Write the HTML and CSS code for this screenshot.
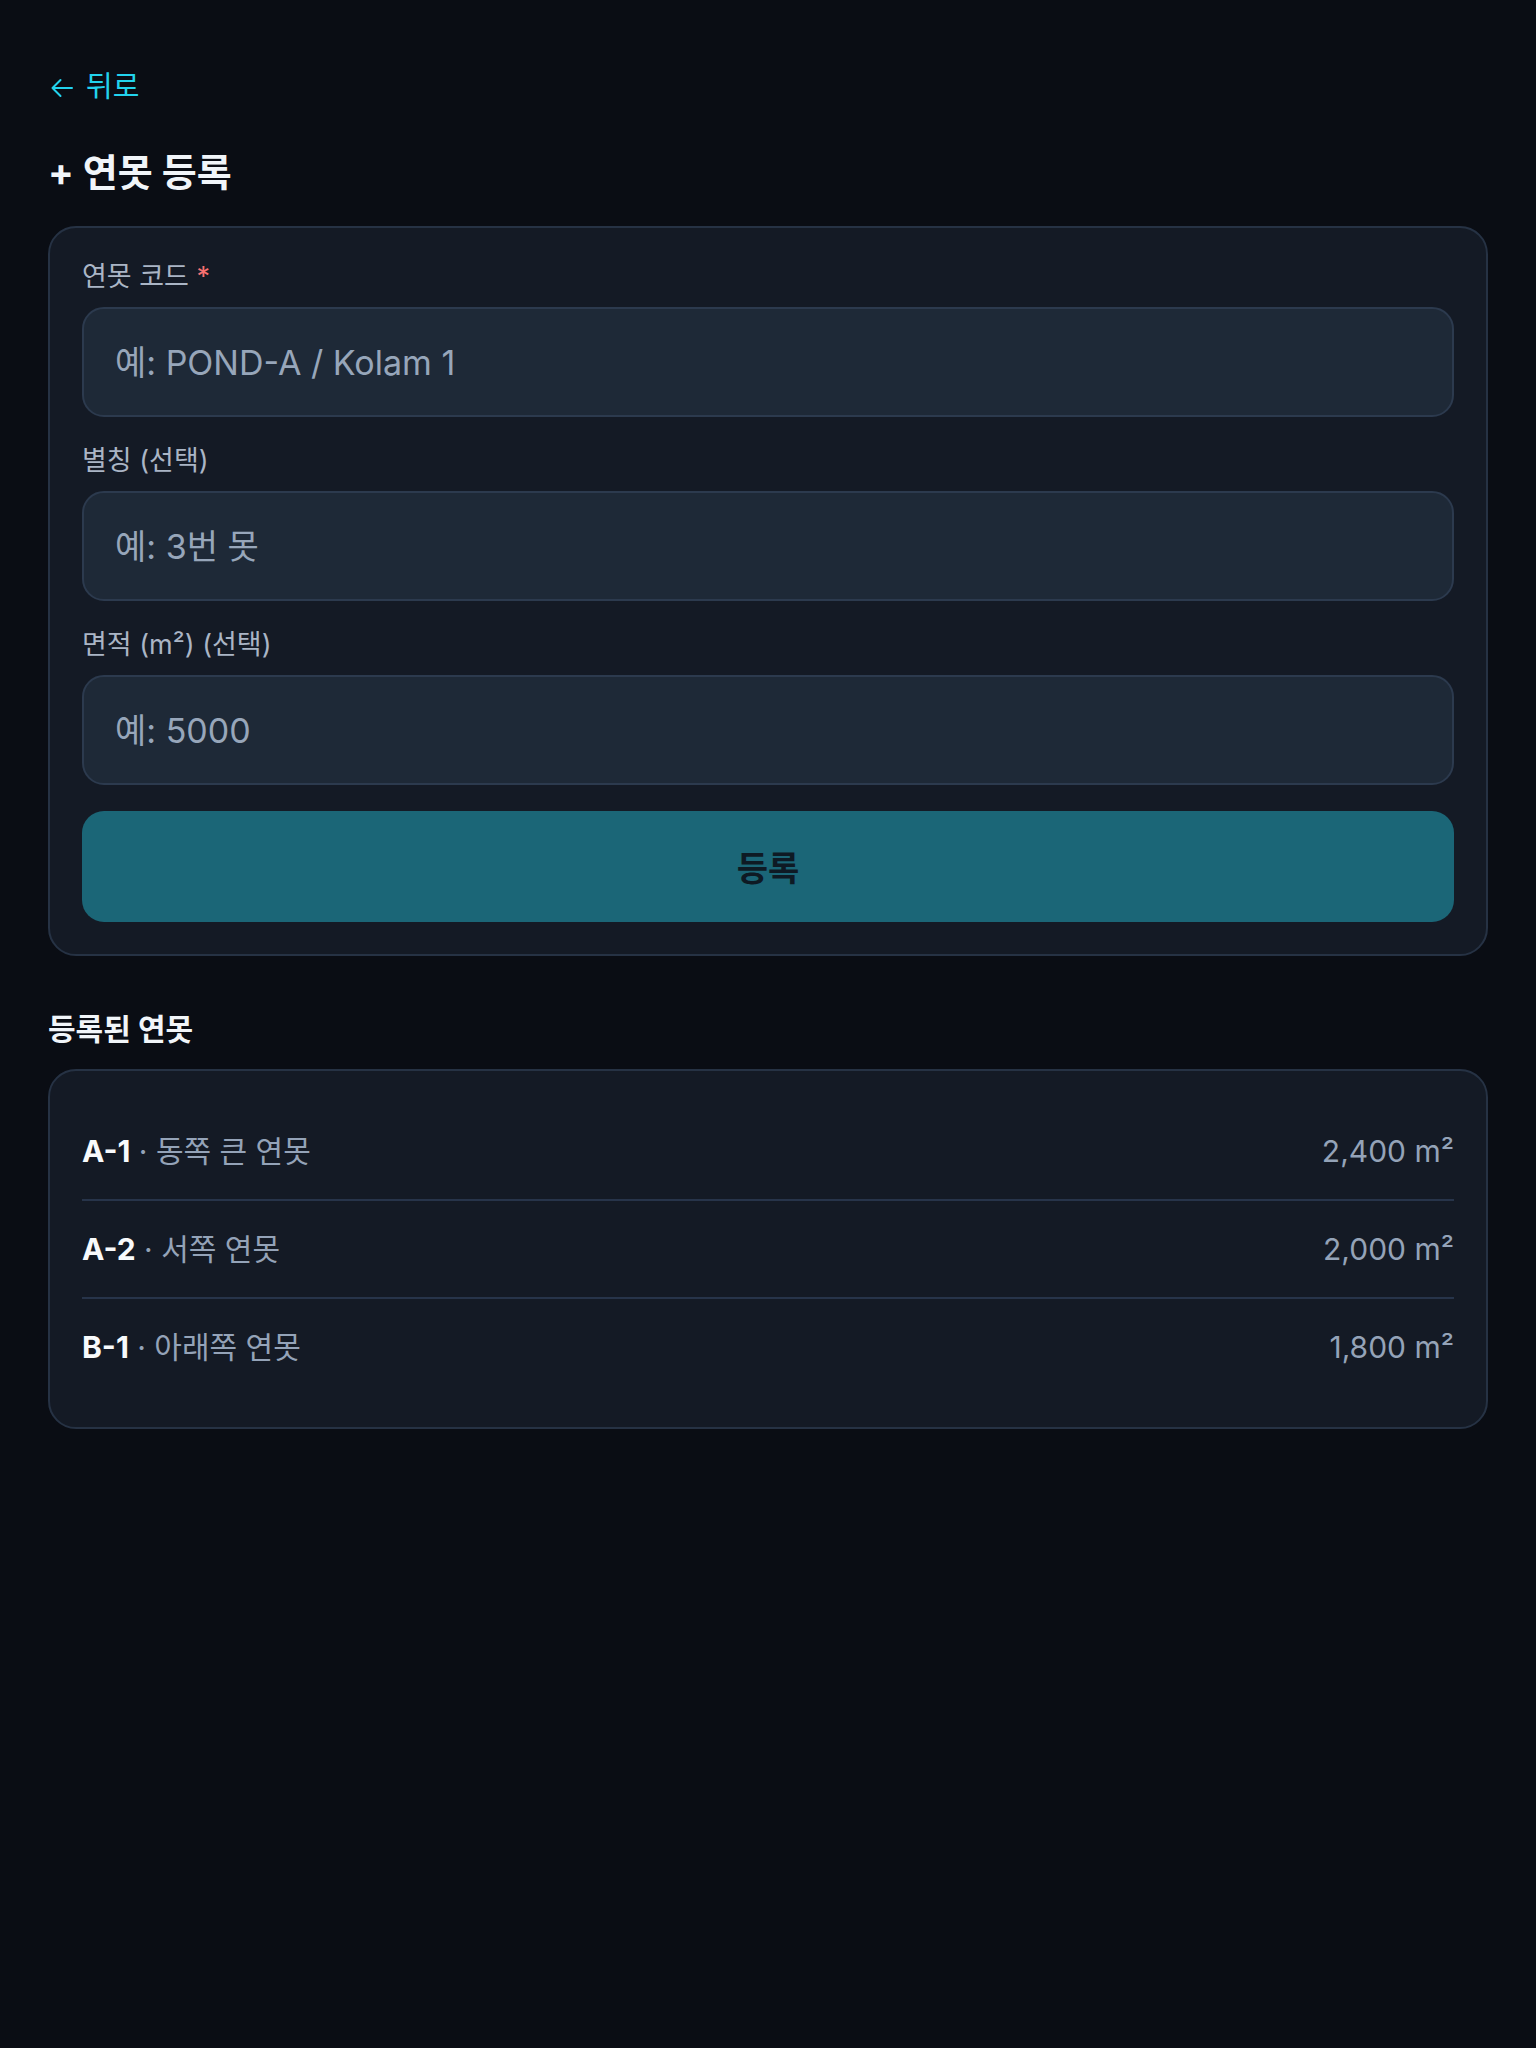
FILE: index.html
```html
<!DOCTYPE html>
<html lang="ko">
<head>
    <meta charset="UTF-8">
    <title>연못 등록</title>
    <link rel="stylesheet" href="styles.css">
</head>
<body>
    <div class="page">
        <a class="back-link" href="#">
            <svg class="back-icon" width="24" height="20" viewBox="0 0 24 20" fill="none" stroke="currentColor" stroke-width="2" stroke-linecap="round" stroke-linejoin="round">
                <path d="M22 10H2.5M10.5 2L2.5 10L10.5 18"/>
            </svg>
            <span>뒤로</span>
        </a>

        <h1 class="page-title">+ 연못 등록</h1>

        <form class="card form-card" onsubmit="return false">
            <div class="field">
                <label for="pond-code">연못 코드 <span class="required">*</span></label>
                <input type="text" id="pond-code" placeholder="예: POND-A / Kolam 1">
            </div>
            <div class="field">
                <label for="pond-alias">별칭 (선택)</label>
                <input type="text" id="pond-alias" placeholder="예: 3번 못">
            </div>
            <div class="field">
                <label for="pond-area">면적 (m²) (선택)</label>
                <input type="text" id="pond-area" inputmode="decimal" placeholder="예: 5000">
            </div>
            <button type="submit" class="submit-btn">등록</button>
        </form>

        <h2 class="section-title">등록된 연못</h2>

        <div class="card list-card">
            <div class="pond-row">
                <div class="pond-name"><strong>A-1</strong> · 동쪽 큰 연못</div>
                <div class="pond-area">2,400 m²</div>
            </div>
            <div class="pond-row">
                <div class="pond-name"><strong>A-2</strong> · 서쪽 연못</div>
                <div class="pond-area">2,000 m²</div>
            </div>
            <div class="pond-row">
                <div class="pond-name"><strong>B-1</strong> · 아래쪽 연못</div>
                <div class="pond-area">1,800 m²</div>
            </div>
        </div>
    </div>
</body>
</html>
```

FILE: styles.css
```css
html, body {
    margin: 0;
    background-color: #0a0d14;
}
body {
    font-family: Inter, "Noto Sans CJK KR", sans-serif;
    color: #f1f5f9;
}
.page {
    padding: 66px 48px 48px;
}
.back-link {
    display: inline-flex;
    align-items: center;
    gap: 12px;
    color: #22d3ee;
    font-size: 29px;
    line-height: 42px;
    text-decoration: none;
}
.back-icon {
    margin-left: 2px;
    margin-top: 2px;
}
.page-title {
    margin: 40px 0 30px;
    font-size: 38px;
    line-height: 48px;
    font-weight: 700;
}
.card {
    background: #141a25;
    border: 2px solid #263244;
    border-radius: 28px;
    padding: 32px;
}
.form-card {
    display: flex;
    flex-direction: column;
}
.field {
    display: flex;
    flex-direction: column;
    margin-bottom: 27px;
}
.field:nth-child(3) {
    margin-bottom: 26px;
}
.field label {
    font-size: 27px;
    line-height: 34px;
    color: #aab5c5;
    margin-bottom: 13px;
}
.required {
    color: #f87171;
}
.field input {
    box-sizing: border-box;
    height: 110px;
    padding: 0 31px;
    background: #1e2937;
    border: 2px solid #2c3a4e;
    border-radius: 22px;
    font-family: inherit;
    font-size: 34px;
    color: #e2e8f0;
    outline: none;
}
.field input::placeholder {
    color: #97a6ba;
}
.submit-btn {
    height: 111px;
    border: none;
    border-radius: 22px;
    background-color: #1b6677;
    color: #0e1a24;
    font-family: inherit;
    font-size: 34px;
    font-weight: 700;
    cursor: pointer;
}
.section-title {
    margin: 55px 0 22px;
    font-size: 30px;
    line-height: 36px;
    font-weight: 700;
}
.pond-row {
    display: flex;
    justify-content: space-between;
    align-items: center;
    padding: 28px 0;
    font-size: 30px;
    line-height: 40px;
    color: #94a3b8;
    border-bottom: 2px solid #27344a;
}
.pond-row:last-child {
    border-bottom: none;
}
.pond-name strong {
    color: #f8fafc;
    font-weight: 700;
}
```
